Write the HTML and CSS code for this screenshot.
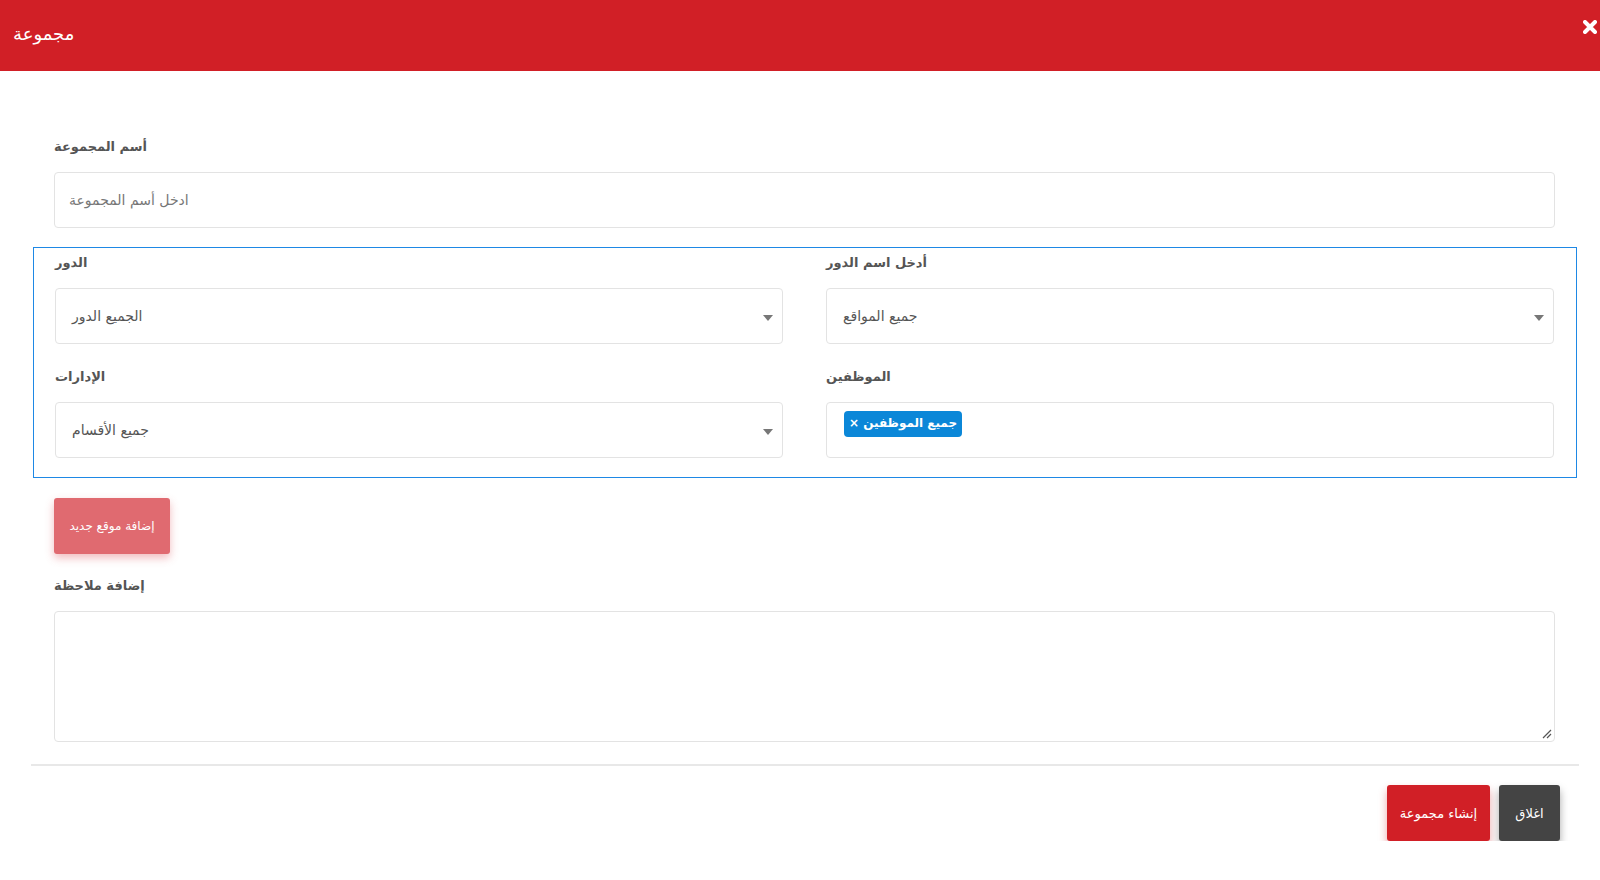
FILE: index.html
```html
<!DOCTYPE html>
<html lang="ar">
<head>
    <meta charset="UTF-8">
    <title>مجموعة</title>
    <link rel="stylesheet" href="styles.css">
</head>
<body>

    <div class="modal-header">
        <h4 class="modal-title">مجموعة</h4>
        <span class="close-btn">
            <svg width="14" height="14" viewBox="0 0 14 14">
                <path d="M2 2 L12 12 M12 2 L2 12" stroke="#fff" stroke-width="4" stroke-linecap="round"/>
            </svg>
        </span>
    </div>

    <div class="modal-body">
        <div class="form-group">
            <label class="field-label">أسم المجموعة</label>
            <div class="field"><span class="placeholder">ادخل أسم المجموعة</span></div>
        </div>

        <div class="location-box">
            <div class="form-group">
                <label class="field-label">الدور</label>
                <div class="field select"><span class="value">الجميع الدور</span><span class="caret"></span></div>
            </div>
            <div class="form-group">
                <label class="field-label">أدخل اسم الدور</label>
                <div class="field select"><span class="value">جميع المواقع</span><span class="caret"></span></div>
            </div>
            <div class="form-group">
                <label class="field-label">الإدارات</label>
                <div class="field select"><span class="value">جميع الأقسام</span><span class="caret"></span></div>
            </div>
            <div class="form-group">
                <label class="field-label">الموظفين</label>
                <div class="field tags">
                    <span class="tag"><span class="tag-x">×</span> جميع الموظفين</span>
                </div>
            </div>
        </div>

        <button class="btn btn-light-red">إضافة موقع جديد</button>

        <div class="form-group">
            <label class="field-label">إضافة ملاحظة</label>
            <div class="field textarea">
                <svg class="grip" width="10" height="10" viewBox="0 0 10 10">
                    <path d="M9 1 L1 9 M9 5 L5 9" stroke="#555" stroke-width="1.2"/>
                </svg>
            </div>
        </div>
    </div>

    <div class="modal-footer">
        <button class="btn btn-red">إنشاء مجموعة</button>
        <button class="btn btn-dark">اغلاق</button>
    </div>

</body>
</html>
```

FILE: styles.css
```css
body{
    margin: 0;
    background: #fff;
    font-family: "DejaVu Sans", "Noto Sans", sans-serif;
    color: #555;
    font-size: 14px;
}
.modal-header{
    height: 71px;
    background-color: #d11f26;
    display: flex;
    align-items: center;
    justify-content: space-between;
    padding: 0 3px 0 13px;
}
.modal-title{
    margin: 0 0 5px 0;
    color: #fff;
    font-size: 18px;
    font-weight: normal;
}
.close-btn{
    display: flex;
    margin-top: -17px;
}
.modal-body{
    padding: 66px 45px 0 54px;
}
.form-group{
    display: flex;
    flex-direction: column;
}
.field-label{
    font-weight: bold;
    font-size: 13px;
    line-height: 20px;
    color: #555;
    margin-bottom: 15px;
}
.field{
    box-sizing: border-box;
    height: 56px;
    border: 1px solid #e3e3e3;
    border-radius: 4px;
    display: flex;
    align-items: center;
    padding: 0 9px 0 14px;
    font-size: 14px;
    position: relative;
}
.placeholder{
    color: #777;
}
.value{
    color: #555;
    flex: 1;
    padding-left: 2px;
}
.caret{
    width: 0;
    height: 0;
    border-left: 5px solid transparent;
    border-right: 5px solid transparent;
    border-top: 6px solid #777;
    margin-top: 4px;
}
.location-box{
    margin: 19px -22px 0 -21px;
    padding: 5px 22px 19px 21px;
    border: 1px solid #1e88e5;
    display: grid;
    grid-template-columns: 1fr 1fr;
    column-gap: 43px;
    row-gap: 23px;
}
.location-box .field-label{
    margin-bottom: 15px;
}
.tags{
    align-items: flex-start;
    padding: 8px 17px;
}
.tag{
    background: #0b87d8;
    color: #fff;
    font-weight: bold;
    font-size: 12px;
    border-radius: 4px;
    padding: 4px 5px 5px 5px;
    line-height: 17px;
    letter-spacing: -0.5px;
}
.tag-x{
    font-size: 12px;
}
.btn{
    border: none;
    border-radius: 3px;
    color: #fff;
    font-family: inherit;
    font-size: 12px;
    height: 56px;
    padding: 0 12px;
    cursor: pointer;
}
.btn-light-red{
    background: #e06a70;
    width: 116px;
    margin: 20px 0 22px 0;
    box-shadow: 0 4px 8px rgba(224,106,112,.45);
}
.textarea{
    height: 131px;
}
.grip{
    position: absolute;
    right: 2px;
    bottom: 2px;
}
.modal-footer{
    margin: 22px 21px 0 31px;
    border-top: 2px solid #e8e8e8;
    padding: 19px 19px 0 0;
    display: flex;
    justify-content: flex-end;
    gap: 9px;
}
.btn-red{
    background: #d11f26;
    width: 103px;
    font-size: 13px;
    box-shadow: 0 5px 8px rgba(209,31,38,.4);
}
.btn-dark{
    background: #444;
    width: 61px;
    font-size: 13px;
    box-shadow: 0 5px 8px rgba(0,0,0,.35);
}
```
